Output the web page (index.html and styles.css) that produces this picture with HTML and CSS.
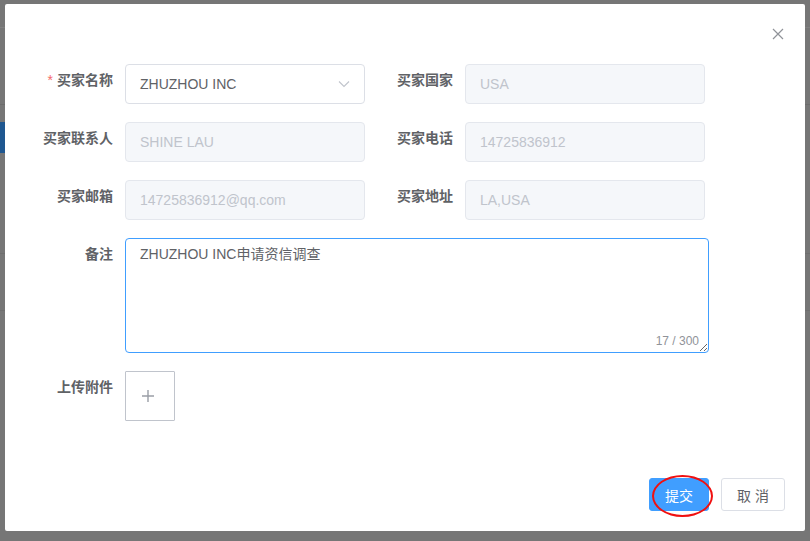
FILE: index.html
```html
<!DOCTYPE html>
<html lang="zh-CN">

<head>
    <meta charset="UTF-8">
    <meta name="viewport" content="width=device-width, initial-scale=1.0">
    <title>资信调查申请</title>
    <link rel="stylesheet" href="styles.css">
</head>

<body>
    <!-- page behind the mask -->
    <div class="backdrop">
        <div class="bg-top"></div>
        <div class="bg-nav"></div>
        <div class="bg-tab"></div>
        <div class="bg-row"></div>
        <div class="bg-row short"></div>
    </div>

    <!-- Dialog -->
    <div class="dialog">
        <div class="dialog-header">
            <button class="close-btn" aria-label="关闭">
                <svg width="12" height="12" viewBox="0 0 12 12"><path d="M1 1L11 11M11 1L1 11" stroke="#909399" stroke-width="1.2" fill="none"/></svg>
            </button>
        </div>

        <form class="dialog-body">
            <div class="form-grid">
                <div class="form-item">
                    <label class="form-label required">买家名称</label>
                    <div class="select">
                        <span class="select-value">ZHUZHOU INC</span>
                        <svg class="select-arrow" width="12" height="8" viewBox="0 0 12 8"><path d="M1 1.5L6 6.5L11 1.5" stroke="#c0c4cc" stroke-width="1.1" fill="none"/></svg>
                    </div>
                </div>
                <div class="form-item">
                    <label class="form-label">买家国家</label>
                    <input class="input" type="text" value="USA" disabled>
                </div>
                <div class="form-item">
                    <label class="form-label">买家联系人</label>
                    <input class="input" type="text" value="SHINE LAU" disabled>
                </div>
                <div class="form-item">
                    <label class="form-label">买家电话</label>
                    <input class="input" type="text" value="14725836912" disabled>
                </div>
                <div class="form-item">
                    <label class="form-label">买家邮箱</label>
                    <input class="input" type="text" value="14725836912@qq.com" disabled>
                </div>
                <div class="form-item">
                    <label class="form-label">买家地址</label>
                    <input class="input" type="text" value="LA,USA" disabled>
                </div>
            </div>

            <div class="form-item">
                <label class="form-label">备注</label>
                <div class="textarea-wrap">
                    <textarea class="textarea">ZHUZHOU INC申请资信调查</textarea>
                    <span class="word-count">17 / 300</span>
                </div>
            </div>

            <div class="form-item">
                <label class="form-label">上传附件</label>
                <div class="upload">
                    <svg width="14" height="14" viewBox="0 0 14 14"><path d="M7 1V13M1 7H13" stroke="#9a9ea6" stroke-width="1.4"/></svg>
                </div>
            </div>
        </form>

        <div class="dialog-footer">
            <span class="btn-mark">
                <button class="btn btn-primary">提交</button>
            </span>
            <button class="btn">取 消</button>
        </div>
    </div>
</body>

</html>
```

FILE: styles.css
```css
* {
    box-sizing: border-box;
}

body {
    margin: 0;
    width: 810px;
    height: 541px;
    overflow: hidden;
    position: relative;
    background-color: #767676;
    font-family: "Liberation Sans", "Noto Sans CJK SC", Arial, sans-serif;
    font-size: 14px;
    color: #606266;
}

/* faint page behind the mask */
.backdrop {
    position: absolute;
    inset: 0;
}

.bg-top {
    height: 28px;
    border-bottom: 1px solid #808080;
}

.bg-nav {
    height: 77px;
    border-bottom: 1px solid #6c6c6c;
}

.bg-tab {
    margin-top: 17px;
    width: 5px;
    height: 31px;
    background-color: #1f5790;
}

.bg-row {
    margin-top: 100px;
    height: 1px;
    background-color: #6e6e6e;
}

.bg-row.short {
    margin-top: 56px;
}

/* Dialog */
.dialog {
    position: absolute;
    left: 5px;
    top: 4px;
    width: 800px;
    height: 527px;
    background-color: #fff;
    border-radius: 2px;
    display: flex;
    flex-direction: column;
}

.dialog-header {
    height: 40px;
    display: flex;
    justify-content: flex-end;
    padding: 24px 20px 0 0;
}

.close-btn {
    border: none;
    background: none;
    padding: 0;
    width: 14px;
    height: 14px;
    cursor: pointer;
}

.dialog-body {
    margin: 0;
    padding: 20px 20px 0;
    flex: 1;
}

.form-grid {
    display: grid;
    grid-template-columns: 340px 340px;
}

.form-item {
    display: flex;
    margin-bottom: 18px;
}

.form-label {
    width: 100px;
    flex-shrink: 0;
    padding-right: 12px;
    text-align: right;
    line-height: 33px;
    font-weight: bold;
    color: #606266;
}

.form-label.required::before {
    content: "*";
    color: #f56c6c;
    margin-right: 4px;
    font-weight: normal;
}

.input,
.select {
    width: 240px;
    height: 40px;
    border: 1px solid #dcdfe6;
    border-radius: 4px;
    padding: 0 15px 0 14px;
    font-family: inherit;
    font-size: 14px;
    color: #606266;
    background-color: #fff;
}

.input:disabled {
    background-color: #f5f7fa;
    border-color: #e4e7ed;
    color: #c0c4cc;
}

.select {
    display: flex;
    align-items: center;
    justify-content: space-between;
    padding-right: 14px;
}

.textarea-wrap {
    position: relative;
    width: 584px;
    height: 115px;
}

.textarea {
    width: 100%;
    height: 100%;
    border: 1px solid #409eff;
    border-radius: 4px;
    padding: 5px 15px 5px 14px;
    font-family: inherit;
    font-size: 14px;
    line-height: 21px;
    color: #606266;
    resize: vertical;
    outline: none;
}

.word-count {
    position: absolute;
    right: 10px;
    bottom: 5px;
    font-size: 12px;
    color: #909399;
}

.upload {
    width: 50px;
    height: 50px;
    border: 1px solid #c0c4cc;
    border-radius: 1px;
    display: flex;
    align-items: center;
    justify-content: center;
    padding-right: 5px;
}

/* Footer */
.dialog-footer {
    display: flex;
    justify-content: flex-end;
    gap: 12px;
    padding: 0 20px 20px;
}

.btn {
    height: 33px;
    padding: 0 15px;
    border: 1px solid #dcdfe6;
    border-radius: 3px;
    background-color: #fff;
    color: #606266;
    font-family: inherit;
    font-size: 14px;
    cursor: pointer;
}

.btn-primary {
    width: 60px;
    background-color: #409eff;
    border-color: #409eff;
    color: #fff;
}

/* red annotation ring */
.btn-mark {
    position: relative;
    display: flex;
}

.btn-mark::after {
    content: "";
    position: absolute;
    left: 3px;
    top: -3px;
    width: 57px;
    height: 38px;
    border: 2.5px solid #f01010;
    border-radius: 50%;
}
```
